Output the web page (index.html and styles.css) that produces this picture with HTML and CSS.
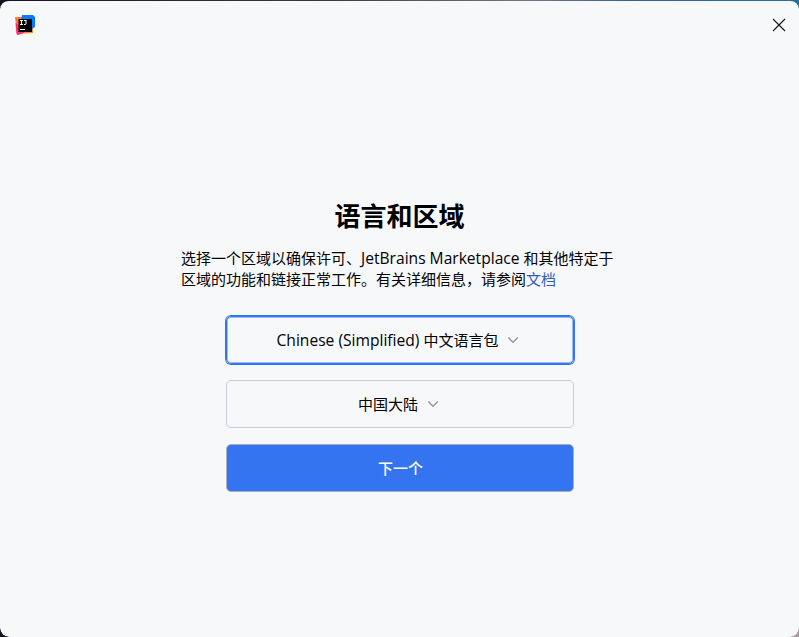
FILE: index.html
```html
<!DOCTYPE html>
<html lang="zh-CN">
<head>
  <meta charset="UTF-8">
  <title>语言和区域</title>
  <link rel="stylesheet" href="styles.css">
</head>
<body>

<div class="window">
  <header class="titlebar">
    <svg class="logo" width="20" height="20" viewBox="0 0 20 20">
      <path d="M0 2l10 0v16H2z" fill="#ff7a2b"/>
      <path d="M0.500 8l3 2 6 8-7 2-1-1z" fill="#ff2d68"/>
      <path d="M9 9h9v9l-9 .5z" fill="#ff8a1f"/>
      <path d="M7 0h11l2 2v10l-3 2L6 5z" fill="#087cfa"/>
      <path d="M3.500 4H17v13H3.500z" fill="#000"/>
      <path d="M5 5.500h3M6.500 5.500v4M5 9.500h3M9 5.500h2.500M11 5.500v3.500l-.5.500H9M5 14.500h5" fill="none" stroke="#fff"/>
    </svg>
    <button class="close" aria-label="关闭">
      <svg width="12" height="12" viewBox="0 0 12 12"><path d="M0 0l12 12M12 0L0 12" stroke="#111" stroke-width="1.1"/></svg>
    </button>
  </header>

  <main class="content">
    <h1>语言和区域</h1>
    <p>选择一个区域以确保许可、<span class="latin">JetBrains Marketplace </span>和其他特定于<br>区域的功能和链接正常工作。有关详细信息，请参阅<a href="#">文档</a></p>

    <div class="actions">
      <button class="select focused"><span><span class="latin">Chinese (Simplified) </span>中文语言包</span>
        <svg class="chevron" width="12" height="8" viewBox="0 0 12 8"><path d="M1.200 1.500l4.800 4.800 4.800-4.800"/></svg>
      </button>
      <button class="select"><span>中国大陆</span>
        <svg class="chevron" width="12" height="8" viewBox="0 0 12 8"><path d="M1.200 1.500l4.800 4.800 4.800-4.800"/></svg>
      </button>
      <button class="primary">下一个</button>
    </div>
  </main>
</div>

</body>
</html>
```

FILE: styles.css
```css
* { box-sizing: border-box; }
body {
  margin: 0;
  height: 637px;
  overflow: hidden;
  background: linear-gradient(90deg, #15131f, #3a3848 40%, #747684 66%, #2d6396 80%, #2b6c9c) top / 100% 40px no-repeat,
    linear-gradient(90deg, #15131f 50%, #a39ba0 50%);
  font-family: "Open Sans", "Noto Sans CJK SC", sans-serif;
  font-size: 15px;
  color: #000;
}
.window {
  height: 637px;
  border-top: 1px solid transparent;
  border-radius: 9px;
  background: #f7f8fa;
  background-clip: padding-box;
}
.titlebar {
  display: flex;
  justify-content: space-between;
  align-items: center;
  height: 48px;
  padding: 0 14px 0 15px;
}
.logo, .close svg, .chevron { display: block; }
button {
  margin: 0;
  border: 0;
  padding: 0;
  background: none;
  font: inherit;
  color: inherit;
}
.close svg { overflow: visible; }
.content {
  display: flex;
  flex-direction: column;
  align-items: center;
  padding-top: 149px;
}
h1 { margin: 0; font-size: 26px; line-height: 36px; }
p { width: 437px; margin: 14px 0 0; line-height: 21px; white-space: nowrap; }
a { color: #315fbd; text-decoration: none; }
.latin { white-space: pre; font-size: 15.6px; line-height: 1; }
.actions {
  display: flex;
  flex-direction: column;
  gap: 16px;
  width: 348px;
  margin-top: 26px;
}
.select, .primary {
  display: flex;
  justify-content: center;
  align-items: center;
  height: 48px;
  border: 1px solid #c9ccd6;
  border-radius: 5px;
  line-height: 20px;
}
.select { gap: 9px; padding-right: 2px; }
.focused {
  padding-right: 3px;
  border-color: #3574f0;
  box-shadow: 0 0 0 1px #3574f0, inset 0 0 0 1px #9dbbf8;
}
.chevron path { fill: none; stroke: #9194a1; stroke-width: 1.3; }
.primary {
  padding-left: 2px;
  border-color: #a9b0c0;
  background: #3574f0;
  color: #fff;
  font-weight: 500;
}
```
